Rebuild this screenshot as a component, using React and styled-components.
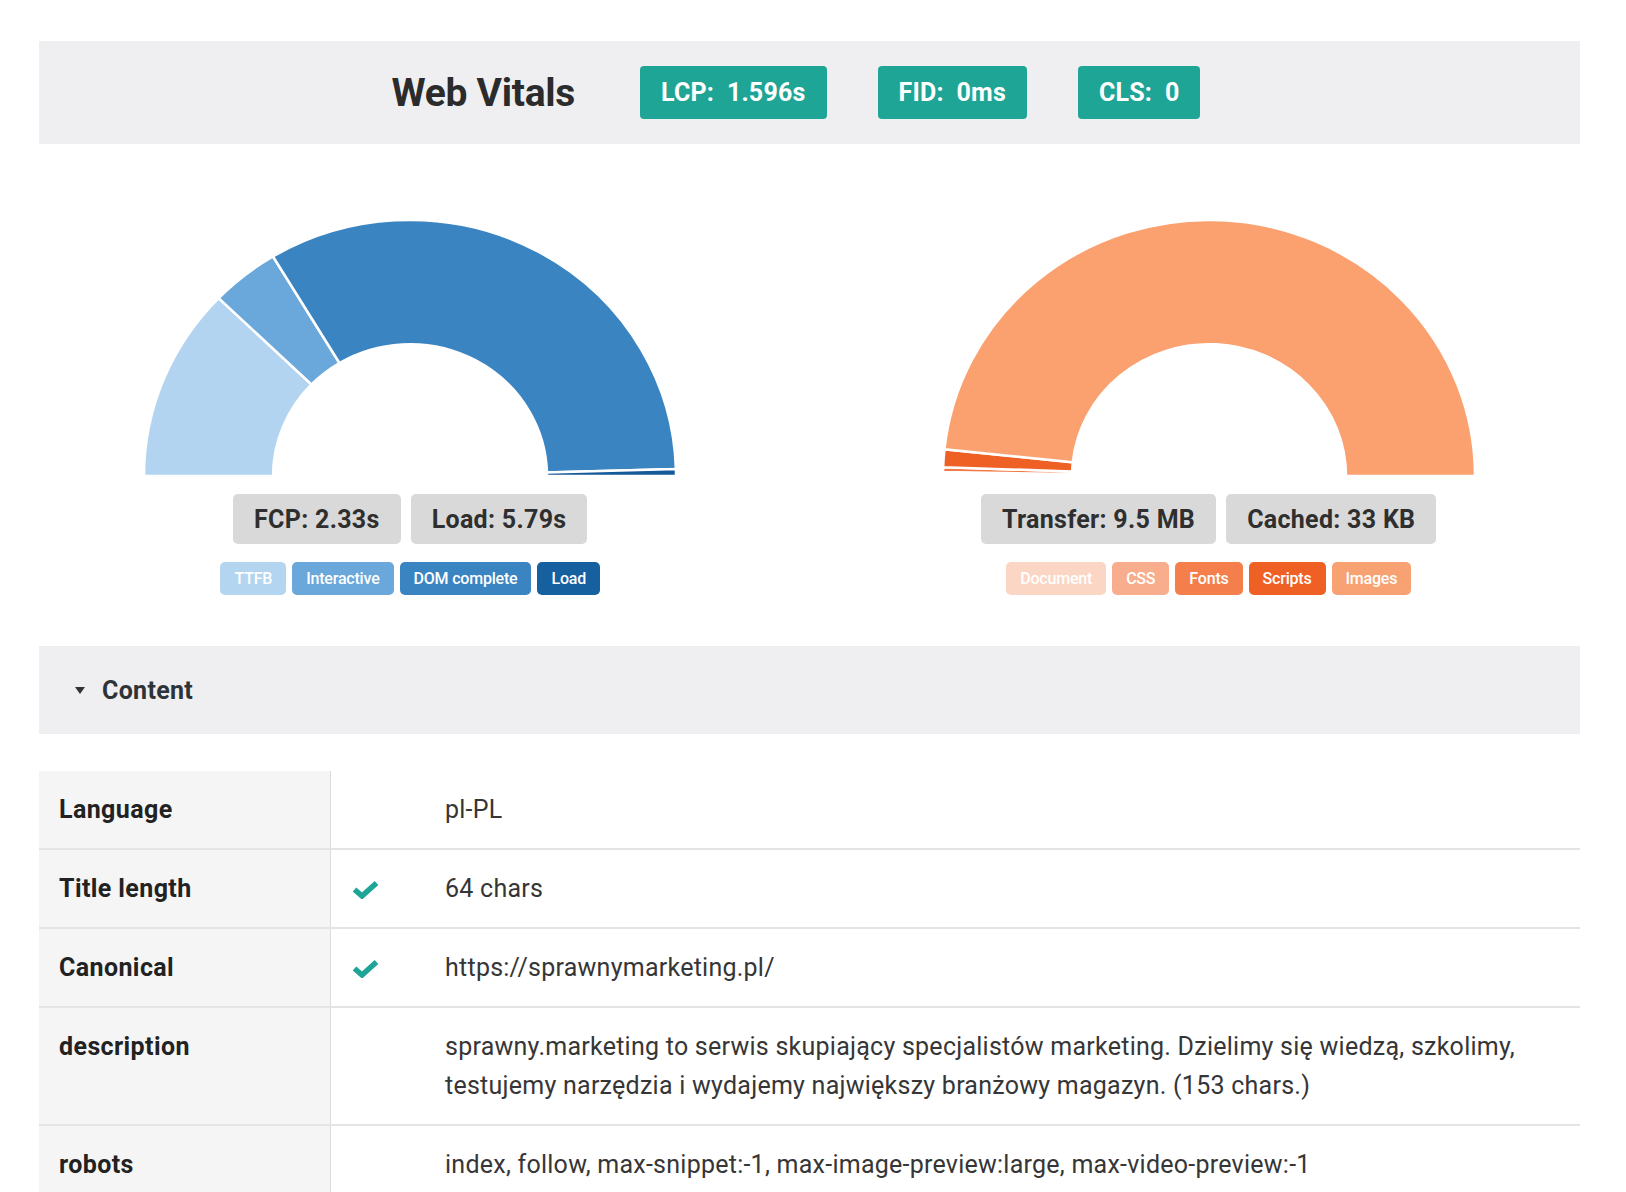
import React from 'react';
import styled, { createGlobalStyle } from 'styled-components';

const GlobalStyle = createGlobalStyle`
  html, body {
    margin: 0;
    padding: 0;
    background: #ffffff;
  }
  body {
    font-family: Roboto, "Liberation Sans", Arial, sans-serif;
    color: #333;
  }
`;

const vitals = [
  { label: 'LCP:', value: '1.596s' },
  { label: 'FID:', value: '0ms' },
  { label: 'CLS:', value: '0' },
];

const timingSlices = [
  { from: 0, to: 44, color: '#b3d4f0' },
  { from: 44, to: 59, color: '#6aa7db' },
  { from: 59, to: 178.4, color: '#3a84c2' },
  { from: 178.4, to: 180, color: '#14599a' },
];

const sizeSlices = [
  { from: 0, to: 0.5, color: '#fbd6c4' },
  { from: 0.5, to: 0.9, color: '#f8ae8d' },
  { from: 0.9, to: 2, color: '#f27a45' },
  { from: 2, to: 6, color: '#ef6024' },
  { from: 6, to: 180, color: '#fba170' },
];

const timingLegend = [
  { name: 'TTFB', color: '#b4d5f0' },
  { name: 'Interactive', color: '#6aa7db' },
  { name: 'DOM complete', color: '#3a84c2' },
  { name: 'Load', color: '#17609f' },
];

const sizeLegend = [
  { name: 'Document', color: '#fbd6c4' },
  { name: 'CSS', color: '#f8ae8d' },
  { name: 'Fonts', color: '#f47f4c' },
  { name: 'Scripts', color: '#ef6024' },
  { name: 'Images', color: '#f8a274' },
];

const rows = [
  { label: 'Language', ok: false, value: 'pl-PL' },
  { label: 'Title length', ok: true, value: '64 chars' },
  { label: 'Canonical', ok: true, value: 'https://sprawnymarketing.pl/' },
  {
    label: 'description',
    ok: false,
    value:
      'sprawny.marketing to serwis skupiający specjalistów marketing. Dzielimy się wiedzą, szkolimy, testujemy narzędzia i wydajemy największy branżowy magazyn. (153 chars.)',
  },
  {
    label: 'robots',
    ok: false,
    value: 'index, follow, max-snippet:-1, max-image-preview:large, max-video-preview:-1',
  },
];

// half doughnut, angle 0 = left edge, 180 = right edge, over the top
function arcPath(cx, cy, r0, r1, a0, a1) {
  const pt = (r, a) => {
    const rad = (a * Math.PI) / 180;
    return [cx - r * Math.cos(rad), cy - r * Math.sin(rad)];
  };
  const [x0, y0] = pt(r1, a0);
  const [x1, y1] = pt(r1, a1);
  const [x2, y2] = pt(r0, a1);
  const [x3, y3] = pt(r0, a0);
  return `M ${x0} ${y0} A ${r1} ${r1} 0 0 1 ${x1} ${y1} L ${x2} ${y2} A ${r0} ${r0} 0 0 0 ${x3} ${y3} Z`;
}

function HalfDoughnut({ slices }) {
  return (
    <ChartSvg viewBox="0 0 540 272" preserveAspectRatio="none">
      {slices.map((s, i) => (
        <path
          key={i}
          d={arcPath(270, 270, 138, 268, s.from, s.to)}
          fill={s.color}
          stroke="#fff"
          strokeWidth="2.5"
          vectorEffect="non-scaling-stroke"
        />
      ))}
    </ChartSvg>
  );
}

function Check() {
  return (
    <svg width="27" height="19" viewBox="0 0 27 19">
      <polyline
        points="2.5,9.5 10,16 24.5,3"
        fill="none"
        stroke="#1fa595"
        strokeWidth="5.5"
        strokeLinejoin="miter"
      />
    </svg>
  );
}

export default function App() {
  return (
    <Page>
      <GlobalStyle />
      <VitalsBar>
        <Title>Web Vitals</Title>
        {vitals.map((v) => (
          <VitalBadge key={v.label}>
            {v.label}&nbsp;&nbsp;{v.value}
          </VitalBadge>
        ))}
      </VitalsBar>

      <Charts>
        <ChartColumn>
          <HalfDoughnut slices={timingSlices} />
          <Stats>
            <Stat>FCP: 2.33s</Stat>
            <Stat>Load: 5.79s</Stat>
          </Stats>
          <Legend>
            {timingLegend.map((l) => (
              <LegendPill key={l.name} $color={l.color}>
                {l.name}
              </LegendPill>
            ))}
          </Legend>
        </ChartColumn>
        <ChartColumn>
          <HalfDoughnut slices={sizeSlices} />
          <Stats>
            <Stat>Transfer: 9.5 MB</Stat>
            <Stat>Cached: 33 KB</Stat>
          </Stats>
          <Legend>
            {sizeLegend.map((l) => (
              <LegendPill key={l.name} $color={l.color}>
                {l.name}
              </LegendPill>
            ))}
          </Legend>
        </ChartColumn>
      </Charts>

      <SectionHeader>
        <Caret />
        Content
      </SectionHeader>

      <Table>
        {rows.map((r) => (
          <Row key={r.label}>
            <Label>{r.label}</Label>
            <IconCell>{r.ok && <Check />}</IconCell>
            <Value>{r.value}</Value>
          </Row>
        ))}
      </Table>
    </Page>
  );
}

const Page = styled.div`
  padding: 41px 46px 0 39px;
`;

const VitalsBar = styled.div`
  height: 103px;
  background: #efeff1;
  display: flex;
  align-items: center;
  justify-content: center;
  gap: 51px;
  padding-right: 27px;
`;

const Title = styled.h1`
  margin: 0 14px 0 0;
  font-size: 39px;
  font-weight: 700;
  color: #2b2b2b;
  letter-spacing: -0.3px;
`;

const VitalBadge = styled.div`
  height: 53px;
  padding: 0 21px;
  display: flex;
  align-items: center;
  background: #1fa595;
  color: #fff;
  font-size: 25px;
  font-weight: 700;
  letter-spacing: 0.2px;
  border-radius: 4px;
`;

const Charts = styled.div`
  display: grid;
  grid-template-columns: 1fr 1fr;
  column-gap: 56px;
  margin-top: 74px;
`;

const ChartColumn = styled.div`
  display: flex;
  flex-direction: column;
  align-items: center;
`;

const ChartSvg = styled.svg`
  display: block;
  width: 536px;
  height: 260px;
`;

const Stats = styled.div`
  display: flex;
  gap: 10px;
  margin-top: 16px;
`;

const Stat = styled.div`
  height: 50px;
  padding: 0 21px;
  display: flex;
  align-items: center;
  background: #d9d9d9;
  color: #2f2f2f;
  font-size: 25px;
  font-weight: 700;
  letter-spacing: 0.3px;
  border-radius: 5px;
`;

const Legend = styled.div`
  display: flex;
  gap: 6px;
  margin-top: 18px;
`;

const LegendPill = styled.div`
  height: 33px;
  padding: 0 14px;
  display: flex;
  align-items: center;
  background: ${(p) => p.$color};
  color: #fff;
  font-size: 16px;
  font-weight: 500;
  letter-spacing: -0.2px;
  border-radius: 5px;
`;

const SectionHeader = styled.div`
  margin-top: 51px;
  height: 88px;
  background: #efeff1;
  display: flex;
  align-items: center;
  gap: 17px;
  padding-left: 36px;
  font-size: 25px;
  font-weight: 700;
  letter-spacing: 0.3px;
  color: #2e3338;
`;

const Caret = styled.span`
  width: 0;
  height: 0;
  border-left: 5.5px solid transparent;
  border-right: 5.5px solid transparent;
  border-top: 7px solid #333;
`;

const Table = styled.div`
  margin-top: 37px;
`;

const Row = styled.div`
  display: grid;
  grid-template-columns: 292px 114px 1fr;
  border-bottom: 2px solid #e4e4e4;
`;

const Label = styled.div`
  background: #f5f5f5;
  border-right: 1px solid #dcdcdc;
  padding: 19px 20px;
  font-size: 25px;
  line-height: 39px;
  font-weight: 700;
  letter-spacing: 0.4px;
  color: #222;
`;

const IconCell = styled.div`
  padding: 30px 0 0 21px;
`;

const Value = styled.div`
  padding: 19px 20px 19px 0;
  font-size: 25px;
  line-height: 39px;
  letter-spacing: 0.25px;
  color: #363636;
`;
